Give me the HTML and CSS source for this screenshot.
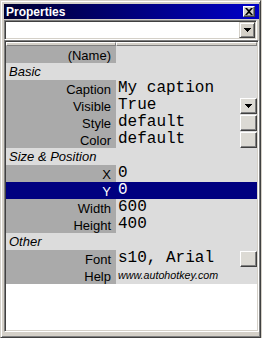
FILE: index.html
```html
<!DOCTYPE html>
<html lang="en">
<head>
    <meta charset="UTF-8">
    <title>Properties</title>
    <link rel="stylesheet" href="styles.css">
</head>
<body>
    <div class="window">
        <div class="titlebar">
            <span class="title">Properties</span>
            <span class="close-btn">
                <svg width="8" height="7" viewBox="0 0 8 7"><path d="M0 0h2l2 2 2-2h2L5 3.5 8 7H6L4 5 2 7H0l3-3.5z" fill="#000"/></svg>
            </span>
        </div>

        <div class="combo">
            <div class="combo-field"></div>
            <div class="combo-btn">
                <svg class="arrow" width="7" height="4" viewBox="0 0 7 4"><path d="M0 0h7v1h-1v1h-1v1h-1v1h-1v-1h-1v-1h-1v-1h-1z" fill="#000"/></svg>
            </div>
        </div>

        <div class="grid">
            <div class="header">
                <div class="header-col key-col"></div>
                <div class="header-col val-col"></div>
            </div>

            <div class="row"><div class="key">(Name)</div><div class="val"></div></div>

            <div class="cat">Basic</div>
            <div class="row"><div class="key">Caption</div><div class="val"><span class="text">My caption</span></div></div>
            <div class="row">
                <div class="key">Visible</div>
                <div class="val">
                    <span class="text">True</span>
                    <span class="row-btn"><svg width="7" height="4" viewBox="0 0 7 4"><path d="M0 0h7v1h-1v1h-1v1h-1v1h-1v-1h-1v-1h-1v-1h-1z" fill="#000"/></svg></span>
                </div>
            </div>
            <div class="row"><div class="key">Style</div><div class="val"><span class="text">default</span><span class="row-btn"></span></div></div>
            <div class="row"><div class="key">Color</div><div class="val"><span class="text">default</span><span class="row-btn"></span></div></div>

            <div class="cat">Size &amp; Position</div>
            <div class="row"><div class="key">X</div><div class="val"><span class="text">0</span></div></div>
            <div class="row selected"><div class="key">Y</div><div class="val"><span class="text">0</span></div></div>
            <div class="row"><div class="key">Width</div><div class="val"><span class="text">600</span></div></div>
            <div class="row"><div class="key">Height</div><div class="val"><span class="text">400</span></div></div>

            <div class="cat">Other</div>
            <div class="row"><div class="key">Font</div><div class="val"><span class="text">s10, Arial</span><span class="row-btn"></span></div></div>
            <div class="row"><div class="key">Help</div><div class="val"><span class="link">www.autohotkey.com</span></div></div>
        </div>
    </div>
</body>
</html>
```

FILE: styles.css
```css
:root {
    --face: #d4d0c8;
    --shadow: #808080;
    --dark: #404040;
    --key-bg: #aaaaaa;
    --val-bg: #dcdcdc;
    --select: #000080;
}

* {
    margin: 0;
    padding: 0;
    box-sizing: border-box;
}

body {
    background: var(--face);
    font-family: 'Liberation Sans', Arial, sans-serif;
}

.window {
    width: 261px;
    height: 338px;
    display: flex;
    flex-direction: column;
    background: var(--face);
    border: 1px solid;
    border-color: var(--face) var(--dark) var(--dark) var(--face);
    box-shadow: inset 1px 1px #fff, inset -1px -1px var(--shadow);
    padding: 3px 1px 5px 3px;
}

/* title bar */
.titlebar {
    height: 15px;
    display: flex;
    align-items: center;
    background: linear-gradient(90deg, #000030, #0000c8);
    padding-left: 2px;
}

.title {
    flex: 1;
    color: #fff;
    font-size: 12px;
    font-weight: bold;
    line-height: 17px;
    height: 15px;
}

.close-btn {
    width: 12px;
    height: 11px;
    margin-right: 4px;
    display: flex;
    align-items: center;
    justify-content: center;
    background: var(--face);
    border: 1px solid;
    border-color: #fff var(--dark) var(--dark) #fff;
    box-shadow: inset -1px -1px var(--shadow);
}

/* combo box */
.combo {
    height: 20px;
    margin-top: 1px;
    margin-right: 2px;
    display: flex;
    background: #fff;
    border: 1px solid;
    border-color: var(--shadow) #fff #fff var(--shadow);
    box-shadow: inset 1px 1px var(--dark), inset -1px -1px var(--face);
    padding: 1px;
}

.combo-field {
    flex: 1;
}

.combo-btn {
    width: 16px;
    height: 16px;
    display: flex;
    align-items: center;
    justify-content: center;
    background: var(--face);
    border: 1px solid;
    border-color: var(--face) var(--dark) var(--dark) var(--face);
    box-shadow: inset 1px 1px #fff, inset -1px -1px var(--shadow);
}

/* property grid */
.grid {
    flex: 1;
    background: #fff;
    border: 1px solid;
    border-color: var(--shadow) #fff #fff var(--shadow);
    box-shadow: inset 1px 1px var(--dark), inset -1px -1px var(--face);
    padding: 1px;
}

.header {
    display: flex;
    height: 4px;
}

.header-col {
    background: var(--face);
    border: 1px solid;
    border-color: #fff var(--shadow) var(--shadow) #fff;
}

.header-col.key-col {
    width: 110px;
}

.header-col.val-col {
    flex: 1;
}

.row {
    display: flex;
    height: 17px;
}

.key {
    width: 110px;
    background: var(--key-bg);
    font-size: 13px;
    line-height: 15px;
    padding-top: 2px;
    padding-right: 5px;
    text-align: right;
    color: #000;
}

.val {
    flex: 1;
    display: flex;
    background: var(--val-bg);
    padding-left: 2px;
}

.text {
    flex: 1;
    font-family: 'Liberation Mono', 'Courier New', monospace;
    font-size: 16px;
    line-height: 17px;
    white-space: pre;
}

.link {
    flex: 1;
    font-size: 10.7px;
    font-style: italic;
    line-height: 17px;
}

.row-btn {
    width: 17px;
    height: 16px;
    margin-top: 1px;
    display: flex;
    align-items: center;
    justify-content: center;
    background: #dcdad4;
    border: 1px solid;
    border-color: #fff var(--dark) var(--dark) #fff;
    box-shadow: inset -1px -1px var(--shadow);
}

.cat {
    height: 17px;
    background: var(--val-bg);
    font-size: 13px;
    font-style: italic;
    line-height: 16px;
    padding-top: 1px;
    padding-left: 3px;
}

.row.selected .key,
.row.selected .val {
    background: var(--select);
    color: #fff;
}
```
